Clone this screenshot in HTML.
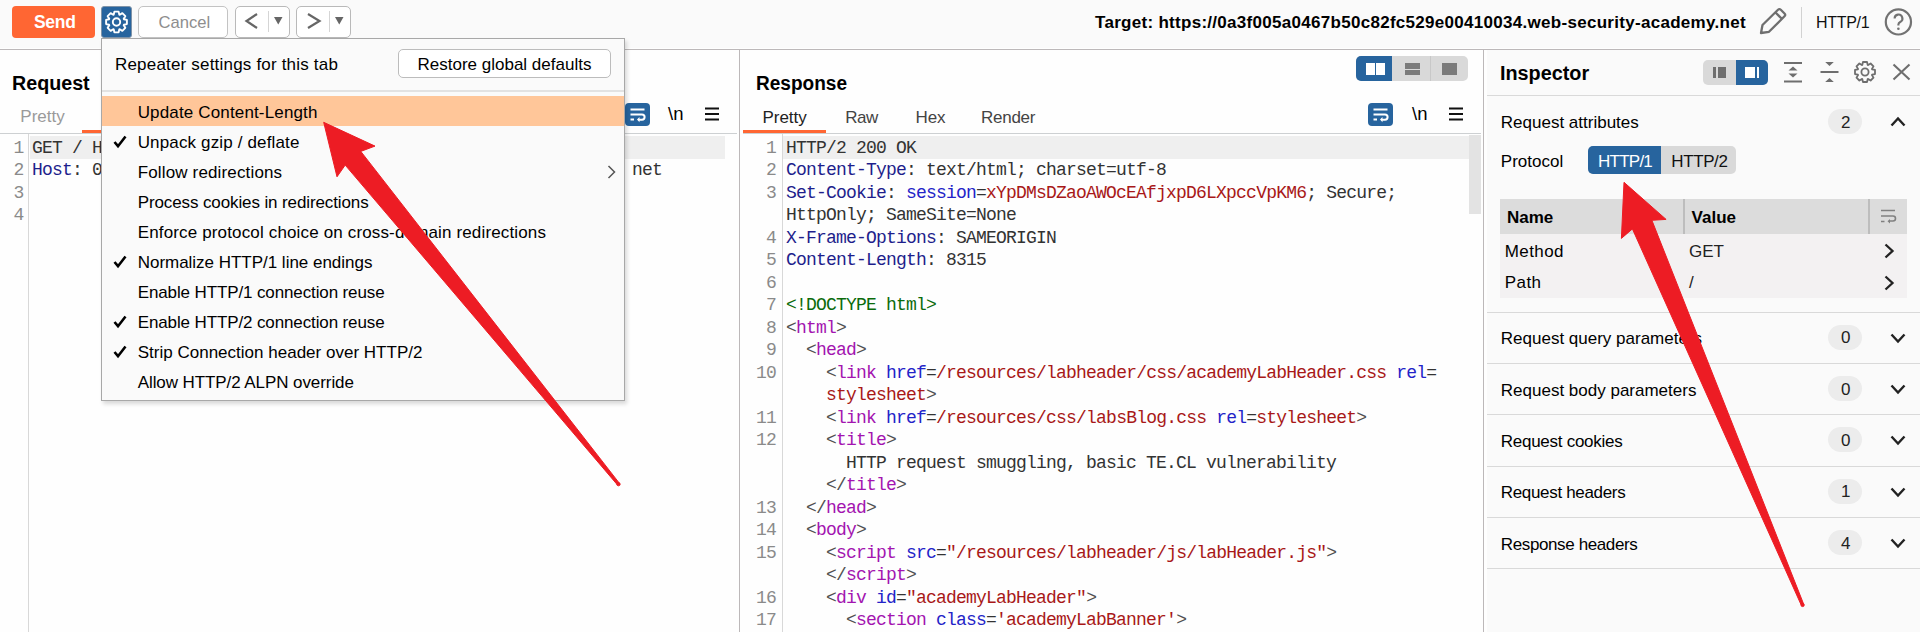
<!DOCTYPE html>
<html><head><meta charset="utf-8">
<style>
*{margin:0;padding:0;box-sizing:border-box}
html,body{width:1920px;height:632px;overflow:hidden;background:#fefefe;font-family:"Liberation Sans",sans-serif;color:#000}
.a{position:absolute}
.t{position:absolute;white-space:pre;font-size:17px;line-height:17px}
.m{position:absolute;white-space:pre;font-family:"Liberation Mono",monospace;font-size:18px;letter-spacing:-0.8px;line-height:22.5px;color:#333}
.ln{position:absolute;white-space:pre;font-family:"Liberation Mono",monospace;font-size:18px;letter-spacing:-0.8px;line-height:22.5px;color:#8a8a8a;text-align:right}
i{font-style:normal}
.h{color:#1e1e8c}.s{color:#2323c8}.r{color:#a81818}.g{color:#0b6b0b}.k{color:#a314b0}.p{color:#505050}
</style></head><body>
<!-- TOOLBAR -->
<div class="a" style="left:0;top:0;width:1920px;height:48px;background:#fafafa"></div>
<div class="a" style="left:0;top:49px;width:1920px;height:1px;background:#bcb8b9"></div>
<div class="a" style="left:12px;top:6px;width:83px;height:32px;background:#ff6633;border-radius:4px"></div>
<div class="t" style="left:34px;top:14.3px;font-size:17.5px;font-weight:bold;color:#fff;letter-spacing:-0.3px">Send</div>
<div class="a" style="left:101px;top:6px;width:31px;height:32px;background:#27649e;border:1px solid #7f93a8;border-radius:3px"></div>
<svg class="a" style="left:0;top:0" width="140" height="45"><path d="M123.89 19.22 L126.89 19.89 L126.89 24.11 L123.89 24.78 L123.70 25.26 L125.34 27.86 L122.36 30.84 L119.76 29.20 L119.28 29.39 L118.61 32.39 L114.39 32.39 L113.72 29.39 L113.24 29.20 L110.64 30.84 L107.66 27.86 L109.30 25.26 L109.11 24.78 L106.11 24.11 L106.11 19.89 L109.11 19.22 L109.30 18.74 L107.66 16.14 L110.64 13.16 L113.24 14.80 L113.72 14.61 L114.39 11.61 L118.61 11.61 L119.28 14.61 L119.76 14.80 L122.36 13.16 L125.34 16.14 L123.70 18.74Z" fill="none" stroke="#fff" stroke-width="1.9" stroke-linejoin="round"/><circle cx="116.5" cy="22" r="3.7" fill="none" stroke="#fff" stroke-width="1.9"/></svg>
<div class="a" style="left:138px;top:6px;width:90px;height:32px;background:#fff;border:1px solid #c3c3c3;border-radius:5px"></div>
<div class="t" style="left:158.5px;top:13.7px;font-size:16.6px;color:#8e8e8e">Cancel</div>
<div class="a" style="left:235px;top:6px;width:55px;height:32px;background:#fff;border:1px solid #b9b9b9;border-radius:5px"></div>
<svg class="a" style="left:244px;top:12px" width="16" height="18"><path d="M13 2 L2.5 9 L13 16" fill="none" stroke="#666" stroke-width="2.2"/></svg>
<div class="a" style="left:268px;top:11px;width:1px;height:21px;background:#d5d5d5"></div>
<svg class="a" style="left:274px;top:17px" width="9" height="8"><path d="M0 0H8.5L4.25 7.5Z" fill="#666"/></svg>
<div class="a" style="left:296px;top:6px;width:55px;height:32px;background:#fff;border:1px solid #b9b9b9;border-radius:5px"></div>
<svg class="a" style="left:306px;top:12px" width="16" height="18"><path d="M2 2 L13.5 9 L2 16" fill="none" stroke="#666" stroke-width="2.2"/></svg>
<div class="a" style="left:329px;top:11px;width:1px;height:21px;background:#d5d5d5"></div>
<svg class="a" style="left:335px;top:17px" width="9" height="8"><path d="M0 0H8.5L4.25 7.5Z" fill="#666"/></svg>
<div class="t" style="left:1095px;top:13.5px;font-weight:bold;letter-spacing:0.29px">Target: https://0a3f005a0467b50c82fc529e00410034.web-security-academy.net</div>
<svg class="a" style="left:1758px;top:7px" width="30" height="29" viewBox="0 0 30 29"><path d="M3 26 L4.5 18 L20 2.8 a2 2 0 0 1 2.8 0 L26.5 6.5 a2 2 0 0 1 0 2.8 L11 24.8 Z M17.5 5.5 L23.8 11.8" fill="none" stroke="#6f6f6f" stroke-width="2.3" stroke-linejoin="round"/></svg>
<div class="a" style="left:1801px;top:7px;width:1px;height:31px;background:#d2d2d2"></div>
<div class="t" style="left:1816px;top:14px;font-size:16px;letter-spacing:-0.3px;color:#111">HTTP/1</div>
<svg class="a" style="left:1884px;top:8px" width="29" height="28" viewBox="0 0 29 28"><circle cx="14.4" cy="13.9" r="12.6" fill="none" stroke="#727272" stroke-width="2.2"/><path d="M10.6 10.5a3.9 3.9 0 1 1 5.6 3.5c-1.2.6-1.8 1.3-1.8 2.6v1" fill="none" stroke="#727272" stroke-width="2.1"/><circle cx="14.4" cy="20.8" r="1.3" fill="#727272"/></svg>
<!-- REQUEST PANEL -->
<div class="a" style="left:739px;top:50px;width:1px;height:582px;background:#bcb8b9"></div>
<div class="t" style="left:11.5px;top:74.5px;font-size:20px;font-weight:bold;transform:scaleX(0.984);transform-origin:0 0">Request</div>
<div class="t" style="left:20.3px;top:108.3px;color:#9a9a9a">Pretty</div>
<div class="a" style="left:82px;top:130px;width:82px;height:3px;background:#ff6633"></div>
<div class="a" style="left:0;top:133px;width:737px;height:1px;background:#cdd0d2"></div>
<div class="a" style="left:625px;top:103px;width:25px;height:23px;background:#27649e;border-radius:4px"></div>
<svg class="a" style="left:629px;top:106px" width="17" height="17" viewBox="0 0 17 17"><path d="M1.5 3.5H15.5M1.5 8.5H13a2.6 2.6 0 0 1 0 5.2H9.5M1.5 13.6H5" fill="none" stroke="#fff" stroke-width="2"/><path d="M10.5 11L8 13.6 10.5 16.2Z" fill="#fff"/></svg>
<div class="t" style="left:668px;top:105px;font-size:18.5px">\n</div>
<svg class="a" style="left:705px;top:107px" width="15" height="14"><path d="M0 1.5H14M0 7H14M0 12.5H14" stroke="#111" stroke-width="2.1"/></svg>
<div class="a" style="left:28px;top:134px;width:1px;height:498px;background:#d8d8d8"></div>
<div class="a" style="left:30px;top:136px;width:695px;height:23px;background:#efefef"></div>
<div class="ln" style="left:0;top:136.6px;width:23.5px">1
2
3
4</div>
<div class="m" style="left:32px;top:136.6px"><span>GET / HTTP/2</span>
<span style="color:#1e1e8c">Host</span>: 0a3f005a0467b50c82fc529e00410034.web-security-academy.net</div>
<div class="a" style="left:625px;top:160px;width:7px;height:20px;background:#fefefe"></div>
<!-- RESPONSE PANEL -->
<div class="a" style="left:1483px;top:50px;width:1px;height:582px;background:#bcb8b9"></div>
<div class="t" style="left:756px;top:74.5px;font-size:20px;font-weight:bold;transform:scaleX(0.952);transform-origin:0 0">Response</div>
<div class="a" style="left:1356px;top:56px;width:112px;height:25px;background:#d9d9d9;border-radius:5px;overflow:hidden">
 <div class="a" style="left:0;top:0;width:36px;height:25px;background:#27649e"></div>
 <div class="a" style="left:74px;top:0;width:1px;height:25px;background:#c8c8c8"></div>
 <div class="a" style="left:10px;top:7px;width:9px;height:12px;background:#fff"></div>
 <div class="a" style="left:20px;top:7px;width:9px;height:12px;background:#fff"></div>
 <div class="a" style="left:49px;top:7px;width:15px;height:5.5px;background:#7b7b7b"></div>
 <div class="a" style="left:49px;top:13.5px;width:15px;height:5.5px;background:#7b7b7b"></div>
 <div class="a" style="left:86px;top:7px;width:15px;height:12px;background:#7b7b7b"></div>
</div>
<div class="t" style="left:762.4px;top:108.6px;color:#222">Pretty</div>
<div class="t" style="left:845.2px;top:108.6px;color:#444;letter-spacing:-0.4px">Raw</div>
<div class="t" style="left:915.6px;top:108.6px;color:#444;letter-spacing:-0.2px">Hex</div>
<div class="t" style="left:981.1px;top:108.6px;color:#444;letter-spacing:-0.3px">Render</div>
<div class="a" style="left:743px;top:130px;width:83px;height:3px;background:#ff6633"></div>
<div class="a" style="left:743px;top:133px;width:738px;height:1px;background:#cdd0d2"></div>
<div class="a" style="left:1368px;top:103px;width:25px;height:23px;background:#27649e;border-radius:4px"></div>
<svg class="a" style="left:1372px;top:106px" width="17" height="17" viewBox="0 0 17 17"><path d="M1.5 3.5H15.5M1.5 8.5H13a2.6 2.6 0 0 1 0 5.2H9.5M1.5 13.6H5" fill="none" stroke="#fff" stroke-width="2"/><path d="M10.5 11L8 13.6 10.5 16.2Z" fill="#fff"/></svg>
<div class="t" style="left:1412px;top:105px;font-size:18.5px">\n</div>
<svg class="a" style="left:1449px;top:107px" width="15" height="14"><path d="M0 1.5H14M0 7H14M0 12.5H14" stroke="#111" stroke-width="2.1"/></svg>
<div class="a" style="left:782px;top:134px;width:1px;height:498px;background:#d8d8d8"></div>
<div class="a" style="left:783px;top:136px;width:686px;height:23px;background:#efefef"></div>
<div class="a" style="left:1469px;top:135px;width:12px;height:79px;background:#e3e3e3"></div>
<div class="ln" style="left:740px;top:136.6px;width:36px">1
2
3

4
5
6
7
8
9
10

11
12


13
14
15

16
17</div>
<div class="m" style="left:786px;top:136.6px">HTTP/2 200 OK
<i class="h">Content-Type</i>: text/html; charset=utf-8
<i class="h">Set-Cookie</i>: <i class="s">session</i>=<i class="r">xYpDMsDZaoAWOcEAfjxpD6LXpccVpKM6</i>; Secure;
HttpOnly; SameSite=None
<i class="h">X-Frame-Options</i>: SAMEORIGIN
<i class="h">Content-Length</i>: 8315

<i class="g">&lt;!DOCTYPE html&gt;</i>
<i class="p">&lt;</i><i class="k">html</i><i class="p">&gt;</i>
  <i class="p">&lt;</i><i class="k">head</i><i class="p">&gt;</i>
    <i class="p">&lt;</i><i class="k">link</i> <i class="s">href</i>=<i class="r">/resources/labheader/css/academyLabHeader.css</i> <i class="s">rel</i>=
    <i class="r">stylesheet</i><i class="p">&gt;</i>
    <i class="p">&lt;</i><i class="k">link</i> <i class="s">href</i>=<i class="r">/resources/css/labsBlog.css</i> <i class="s">rel</i>=<i class="r">stylesheet</i><i class="p">&gt;</i>
    <i class="p">&lt;</i><i class="k">title</i><i class="p">&gt;</i>
      HTTP request smuggling, basic TE.CL vulnerability
    <i class="p">&lt;/</i><i class="k">title</i><i class="p">&gt;</i>
  <i class="p">&lt;/</i><i class="k">head</i><i class="p">&gt;</i>
  <i class="p">&lt;</i><i class="k">body</i><i class="p">&gt;</i>
    <i class="p">&lt;</i><i class="k">script</i> <i class="s">src</i>=<i class="r">"/resources/labheader/js/labHeader.js"</i><i class="p">&gt;</i>
    <i class="p">&lt;/</i><i class="k">script</i><i class="p">&gt;</i>
    <i class="p">&lt;</i><i class="k">div</i> <i class="s">id</i>=<i class="r">"academyLabHeader"</i><i class="p">&gt;</i>
      <i class="p">&lt;</i><i class="k">section</i> <i class="s">class</i>=<i class="r">'academyLabBanner'</i><i class="p">&gt;</i></div>
<!-- INSPECTOR -->
<div class="a" style="left:1487px;top:50px;width:433px;height:582px;background:#fafafa"></div>
<div class="t" style="left:1500px;top:64.5px;font-size:20px;font-weight:bold;transform:scaleX(0.99);transform-origin:0 0">Inspector</div>
<div class="a" style="left:1703px;top:60px;width:65px;height:25px;background:#d9d9d9;border-radius:5px;overflow:hidden">
 <div class="a" style="left:33px;top:0;width:32px;height:25px;background:#27649e"></div>
 <div class="a" style="left:10px;top:7px;width:2.5px;height:11px;background:#6e6e6e"></div>
 <div class="a" style="left:14.5px;top:7px;width:8.7px;height:11px;background:#6e6e6e"></div>
 <div class="a" style="left:42.3px;top:7px;width:9.4px;height:11px;background:#fff"></div>
 <div class="a" style="left:53.5px;top:7px;width:2.4px;height:11px;background:#fff"></div>
</div>
<svg class="a" style="left:1783px;top:61px" width="20" height="22"><path d="M1 2H19M1 20.5H19" stroke="#6e6e6e" stroke-width="2"/><path d="M10 5.5L14.5 9.5H5.5Z M10 16.5L14.5 12.5H5.5Z" fill="#6e6e6e"/></svg>
<svg class="a" style="left:1820px;top:61px" width="19" height="22"><path d="M0.5 11H18.5" stroke="#6e6e6e" stroke-width="2"/><path d="M9.5 5L13.8 1H5.2Z M9.5 17L13.8 21H5.2Z" fill="#6e6e6e"/></svg>
<svg class="a" style="left:1840px;top:50px" width="50" height="45"><path d="M32.11 19.32 L35.00 19.97 L35.00 24.03 L32.11 24.68 L31.92 25.14 L33.50 27.64 L30.64 30.50 L28.14 28.92 L27.68 29.11 L27.03 32.00 L22.97 32.00 L22.32 29.11 L21.86 28.92 L19.36 30.50 L16.50 27.64 L18.08 25.14 L17.89 24.68 L15.00 24.03 L15.00 19.97 L17.89 19.32 L18.08 18.86 L16.50 16.36 L19.36 13.50 L21.86 15.08 L22.32 14.89 L22.97 12.00 L27.03 12.00 L27.68 14.89 L28.14 15.08 L30.64 13.50 L33.50 16.36 L31.92 18.86Z" fill="none" stroke="#6e6e6e" stroke-width="1.8" stroke-linejoin="round"/><circle cx="25" cy="22" r="3.6" fill="none" stroke="#6e6e6e" stroke-width="1.8"/></svg>
<svg class="a" style="left:1892px;top:63px" width="19" height="18"><path d="M1.5 1.5L17.5 16.5M17.5 1.5L1.5 16.5" stroke="#6e6e6e" stroke-width="2.1"/></svg>
<div class="a" style="left:1487px;top:95px;width:433px;height:1px;background:#d9d9d9"></div>
<div class="t" style="left:1500.8px;top:113.6px">Request attributes</div>
<div class="a" style="left:1828px;top:109px;width:34px;height:25px;background:#ececec;border-radius:12.5px"></div>
<div class="t" style="left:1841px;top:113.6px;color:#222">2</div>
<svg class="a" style="left:1890px;top:116px" width="16" height="11"><path d="M1.5 9.5L8 2.5L14.5 9.5" fill="none" stroke="#222" stroke-width="2.4"/></svg>
<div class="t" style="left:1500.8px;top:152.5px">Protocol</div>
<div class="a" style="left:1588px;top:146px;width:148px;height:28px;background:#d9d9d9;border-radius:5px;overflow:hidden"><div class="a" style="left:0;top:0;width:73px;height:28px;background:#27649e"></div></div>
<div class="t" style="left:1598px;top:152.5px;color:#fff;letter-spacing:-0.75px">HTTP/1</div>
<div class="t" style="left:1671.3px;top:152.5px;color:#111;letter-spacing:-0.4px">HTTP/2</div>
<div class="a" style="left:1500px;top:199px;width:407px;height:35px;background:#dcdcdc"></div>
<div class="a" style="left:1683px;top:199px;width:2px;height:35px;background:#bdbdbd"></div>
<div class="a" style="left:1868px;top:199px;width:2px;height:35px;background:#bdbdbd"></div>
<div class="t" style="left:1507px;top:208.5px;font-weight:bold">Name</div>
<div class="t" style="left:1691.6px;top:208.5px;font-weight:bold">Value</div>
<svg class="a" style="left:1880px;top:209px" width="17" height="15" viewBox="0 0 17 15"><path d="M1 1.5H15M1 7H13a2.5 2.5 0 0 1 0 5H9M1 12.5H4.5" fill="none" stroke="#808080" stroke-width="1.6"/><path d="M10 10L7.5 12.2 10 14.4Z" fill="#808080"/></svg>
<div class="a" style="left:1500px;top:234px;width:407px;height:64px;background:#f3f1f2"></div>
<div class="t" style="left:1504.8px;top:242.5px;letter-spacing:0.4px">Method</div>
<div class="t" style="left:1504.8px;top:274.3px;letter-spacing:0.4px">Path</div>
<div class="t" style="left:1689px;top:242.5px;color:#222">GET</div>
<div class="t" style="left:1689px;top:274.3px;color:#222">/</div>
<svg class="a" style="left:1883px;top:243px" width="12" height="16"><path d="M2.5 1.5L9.5 8L2.5 14.5" fill="none" stroke="#222" stroke-width="2.3"/></svg>
<svg class="a" style="left:1883px;top:275px" width="12" height="16"><path d="M2.5 1.5L9.5 8L2.5 14.5" fill="none" stroke="#222" stroke-width="2.3"/></svg>
<div class="a" style="left:1487px;top:312px;width:433px;height:1px;background:#d9d9d9"></div>
<div class="t" style="left:1500.8px;top:330.3px">Request query parameters</div>
<div class="a" style="left:1828px;top:324.7px;width:34px;height:25px;background:#ececec;border-radius:12.5px"></div>
<div class="t" style="left:1841px;top:329.3px;color:#222">0</div>
<svg class="a" style="left:1890px;top:332.7px" width="16" height="11"><path d="M1.5 1.5L8 8.5L14.5 1.5" fill="none" stroke="#222" stroke-width="2.4"/></svg>
<div class="a" style="left:1487px;top:363.0px;width:433px;height:1px;background:#d9d9d9"></div>
<div class="t" style="left:1500.8px;top:381.6px">Request body parameters</div>
<div class="a" style="left:1828px;top:376.0px;width:34px;height:25px;background:#ececec;border-radius:12.5px"></div>
<div class="t" style="left:1841px;top:380.6px;color:#222">0</div>
<svg class="a" style="left:1890px;top:384.0px" width="16" height="11"><path d="M1.5 1.5L8 8.5L14.5 1.5" fill="none" stroke="#222" stroke-width="2.4"/></svg>
<div class="a" style="left:1487px;top:414.3px;width:433px;height:1px;background:#d9d9d9"></div>
<div class="t" style="left:1500.8px;top:432.9px;letter-spacing:-0.27px">Request cookies</div>
<div class="a" style="left:1828px;top:427.3px;width:34px;height:25px;background:#ececec;border-radius:12.5px"></div>
<div class="t" style="left:1841px;top:431.9px;color:#222">0</div>
<svg class="a" style="left:1890px;top:435.3px" width="16" height="11"><path d="M1.5 1.5L8 8.5L14.5 1.5" fill="none" stroke="#222" stroke-width="2.4"/></svg>
<div class="a" style="left:1487px;top:465.6px;width:433px;height:1px;background:#d9d9d9"></div>
<div class="t" style="left:1500.8px;top:484.2px;letter-spacing:-0.33px">Request headers</div>
<div class="a" style="left:1828px;top:478.6px;width:34px;height:25px;background:#ececec;border-radius:12.5px"></div>
<div class="t" style="left:1841px;top:483.2px;color:#222">1</div>
<svg class="a" style="left:1890px;top:486.6px" width="16" height="11"><path d="M1.5 1.5L8 8.5L14.5 1.5" fill="none" stroke="#222" stroke-width="2.4"/></svg>
<div class="a" style="left:1487px;top:516.9px;width:433px;height:1px;background:#d9d9d9"></div>
<div class="t" style="left:1500.8px;top:535.5px;letter-spacing:-0.38px">Response headers</div>
<div class="a" style="left:1828px;top:529.9px;width:34px;height:25px;background:#ececec;border-radius:12.5px"></div>
<div class="t" style="left:1841px;top:534.5px;color:#222">4</div>
<svg class="a" style="left:1890px;top:537.9px" width="16" height="11"><path d="M1.5 1.5L8 8.5L14.5 1.5" fill="none" stroke="#222" stroke-width="2.4"/></svg>
<div class="a" style="left:1487px;top:568.2px;width:433px;height:1px;background:#d9d9d9"></div>
<!-- DROPDOWN -->
<div class="a" style="left:101px;top:38px;width:524px;height:363px;background:#fafafa;border:1px solid #a8a8a8;box-shadow:2px 3px 4px rgba(0,0,0,0.15)"></div>
<div class="t" style="left:115px;top:56.2px;letter-spacing:0.19px">Repeater settings for this tab</div>
<div class="a" style="left:398px;top:49px;width:213px;height:29px;background:#fff;border:1px solid #bcbcbc;border-radius:5px"></div>
<div class="t" style="left:417.5px;top:55.6px">Restore global defaults</div>
<div class="a" style="left:102px;top:90px;width:522px;height:2px;background:#e2e2e2"></div>
<div class="a" style="left:102px;top:96px;width:522px;height:30px;background:#ffc699"></div>
<div class="t" style="left:137.7px;top:104.3px;letter-spacing:0.15px">Update Content-Length</div>
<div class="t" style="left:137.7px;top:134.3px;letter-spacing:0.15px">Unpack gzip / deflate</div>
<svg class="a" style="left:113px;top:135.2px" width="14" height="14"><path d="M1.5 7L5 11.2L12.5 1.5" fill="none" stroke="#000" stroke-width="2.6"/></svg>
<div class="t" style="left:137.7px;top:164.3px;letter-spacing:0.15px">Follow redirections</div>
<div class="t" style="left:137.7px;top:194.3px;letter-spacing:-0.11px">Process cookies in redirections</div>
<div class="t" style="left:137.7px;top:224.3px;letter-spacing:0.15px">Enforce protocol choice on cross-domain redirections</div>
<div class="t" style="left:137.7px;top:254.3px;letter-spacing:-0.02px">Normalize HTTP/1 line endings</div>
<svg class="a" style="left:113px;top:255.2px" width="14" height="14"><path d="M1.5 7L5 11.2L12.5 1.5" fill="none" stroke="#000" stroke-width="2.6"/></svg>
<div class="t" style="left:137.7px;top:284.3px;letter-spacing:-0.12px">Enable HTTP/1 connection reuse</div>
<div class="t" style="left:137.7px;top:314.3px;letter-spacing:-0.12px">Enable HTTP/2 connection reuse</div>
<svg class="a" style="left:113px;top:315.2px" width="14" height="14"><path d="M1.5 7L5 11.2L12.5 1.5" fill="none" stroke="#000" stroke-width="2.6"/></svg>
<div class="t" style="left:137.7px;top:344.3px;letter-spacing:0.01px">Strip Connection header over HTTP/2</div>
<svg class="a" style="left:113px;top:345.2px" width="14" height="14"><path d="M1.5 7L5 11.2L12.5 1.5" fill="none" stroke="#000" stroke-width="2.6"/></svg>
<div class="t" style="left:137.7px;top:374.3px;letter-spacing:-0.08px">Allow HTTP/2 ALPN override</div>
<svg class="a" style="left:607px;top:165px" width="9" height="14"><path d="M1.5 1L7.5 7L1.5 13" fill="none" stroke="#555" stroke-width="1.5"/></svg>
<svg class="a" style="left:0;top:0" width="1920" height="632"><g fill="#ed1c24" stroke="#ed1c24" stroke-width="1" stroke-linejoin="round"><path d="M323.7 122.3 L375.0 146.1 L360.8 151.4 L619.5 483.4 L617.5 485.0 L345.2 165.1 L337.0 176.8Z"/><path d="M1624.0 182.3 L1666.1 219.4 L1651.9 220.3 L1803.8 604.5 L1801.4 605.5 L1632.4 228.9 L1621.4 238.4Z"/><circle cx="618.5" cy="484.2" r="1.6"/><circle cx="1802.6" cy="605" r="1.6"/></g></svg>

</body></html>
